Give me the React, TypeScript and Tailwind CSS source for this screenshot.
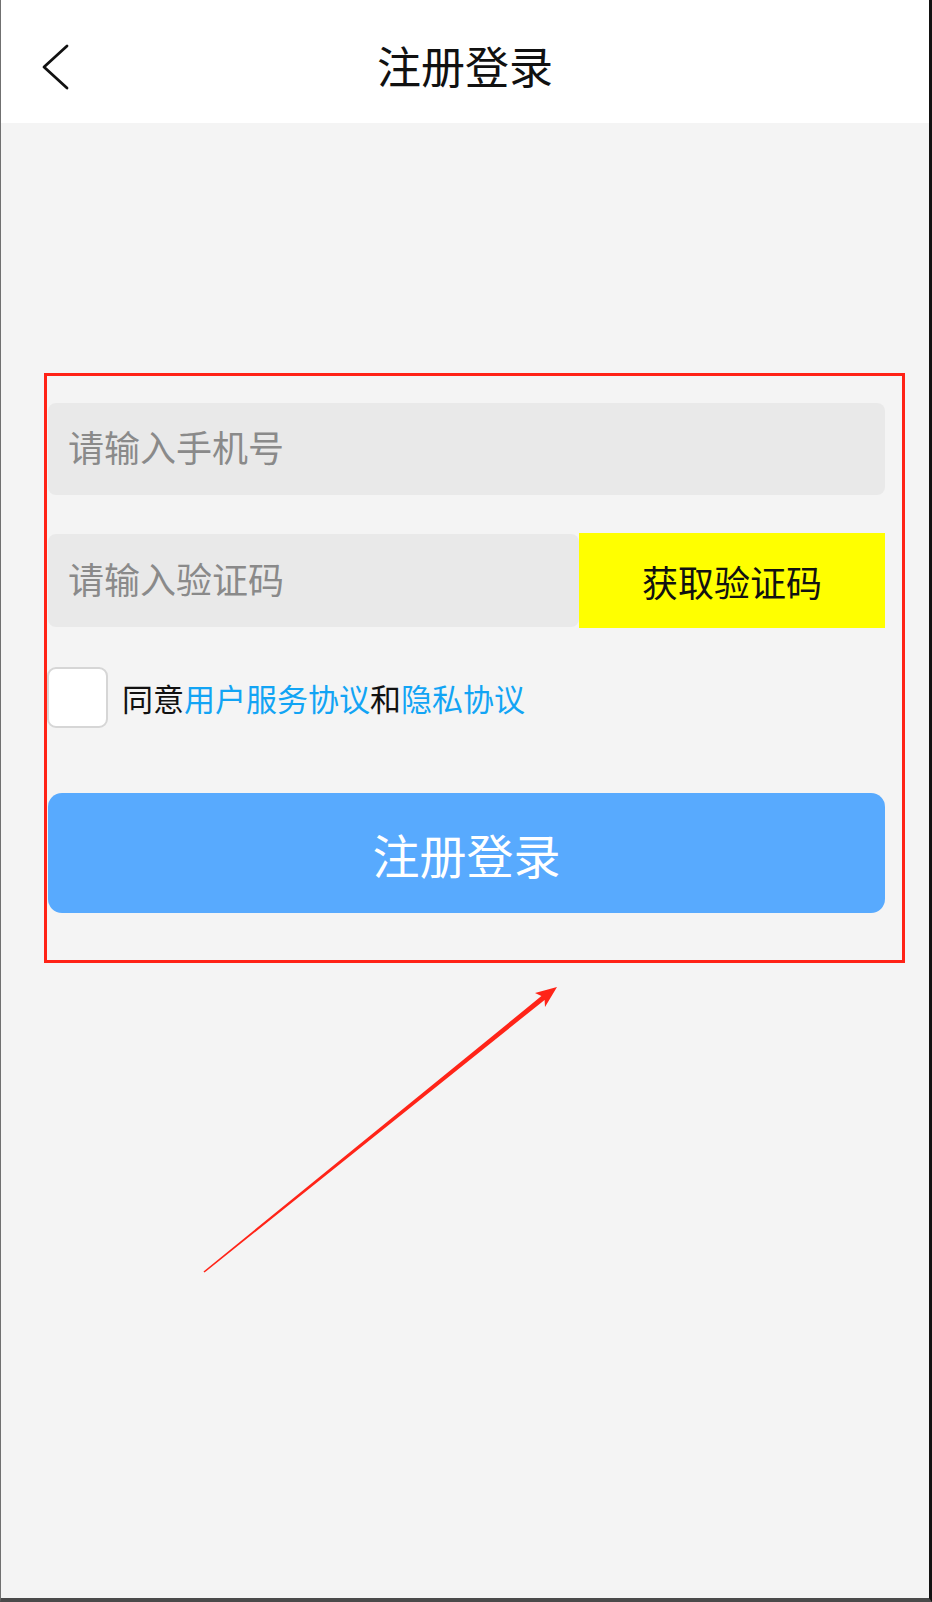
import { useState } from 'react'

const font = { fontFamily: '"Noto Sans CJK SC", "Noto Sans", sans-serif' }

export default function App() {
  const [agree, setAgree] = useState(false)

  return (
    <div
      className="relative flex h-[1602px] w-[932px] flex-col border-b-4 border-l border-r-[3px] border-b-[#4a4a4a] border-l-[#707070] border-r-[#121212] bg-[#f4f4f4]"
      style={font}
    >
      {/* header */}
      <div className="relative flex h-[123px] items-center justify-center bg-white">
        <svg
          className="absolute left-[41px] top-[44px]"
          width="28"
          height="48"
          viewBox="0 0 28 48"
          fill="none"
        >
          <path
            d="M25 2 L2 23 L25 44"
            stroke="#111"
            strokeWidth="2.8"
            strokeLinecap="round"
            strokeLinejoin="round"
          />
        </svg>
        <h1 className="pt-[6px] text-[44px] leading-none text-[#111]">注册登录</h1>
      </div>

      {/* form */}
      <div className="flex-1">
        <div className="ml-[43px] mt-[250px] w-[861px] border-[3px] border-[#ff2216] pb-[47px] pl-[1px] pr-[17px] pt-[27px]">
          <div className="flex h-[92px] items-center rounded-lg bg-[#e9e9e9] pb-[6px] pl-5">
            <span className="text-[36px] leading-none text-[#8a8a8a]">请输入手机号</span>
          </div>

          <div className="mt-[38px] flex items-center">
            <div className="flex h-[93px] flex-1 items-center rounded-lg bg-[#e9e9e9] pb-[6px] pl-5">
              <span className="text-[36px] leading-none text-[#8a8a8a]">请输入验证码</span>
            </div>
            <button className="flex h-[95px] w-[306px] items-center justify-center bg-[#ffff00] text-[36px] leading-none text-[#111]">
              获取验证码
            </button>
          </div>

          <div className="-ml-[1px] mt-[39px] flex items-center">
            <button
              onClick={() => setAgree(!agree)}
              className="h-[61px] w-[61px] rounded-[9px] border-2 border-[#d6d6d6] bg-white"
            />
            <p className="ml-[14px] text-[31px] leading-none text-[#111]">
              同意<span className="text-[#12a4f4]">用户服务协议</span>和
              <span className="text-[#12a4f4]">隐私协议</span>
            </p>
          </div>

          <button className="mt-[65px] flex h-[120px] w-full items-center justify-center rounded-[14px] bg-[#58aafe] text-[47px] leading-none text-white">
            注册登录
          </button>
        </div>
      </div>

      {/* annotation arrow */}
      <svg
        className="pointer-events-none absolute left-[-1px] top-0"
        width="932"
        height="1602"
        viewBox="0 0 932 1602"
      >
        <polygon
          points="203.5,1271.4 541.4,996.1 535,993 557,987 545,1007 544.6,999.9 204.5,1272.6"
          fill="#ff2418"
        />
      </svg>
    </div>
  )
}
